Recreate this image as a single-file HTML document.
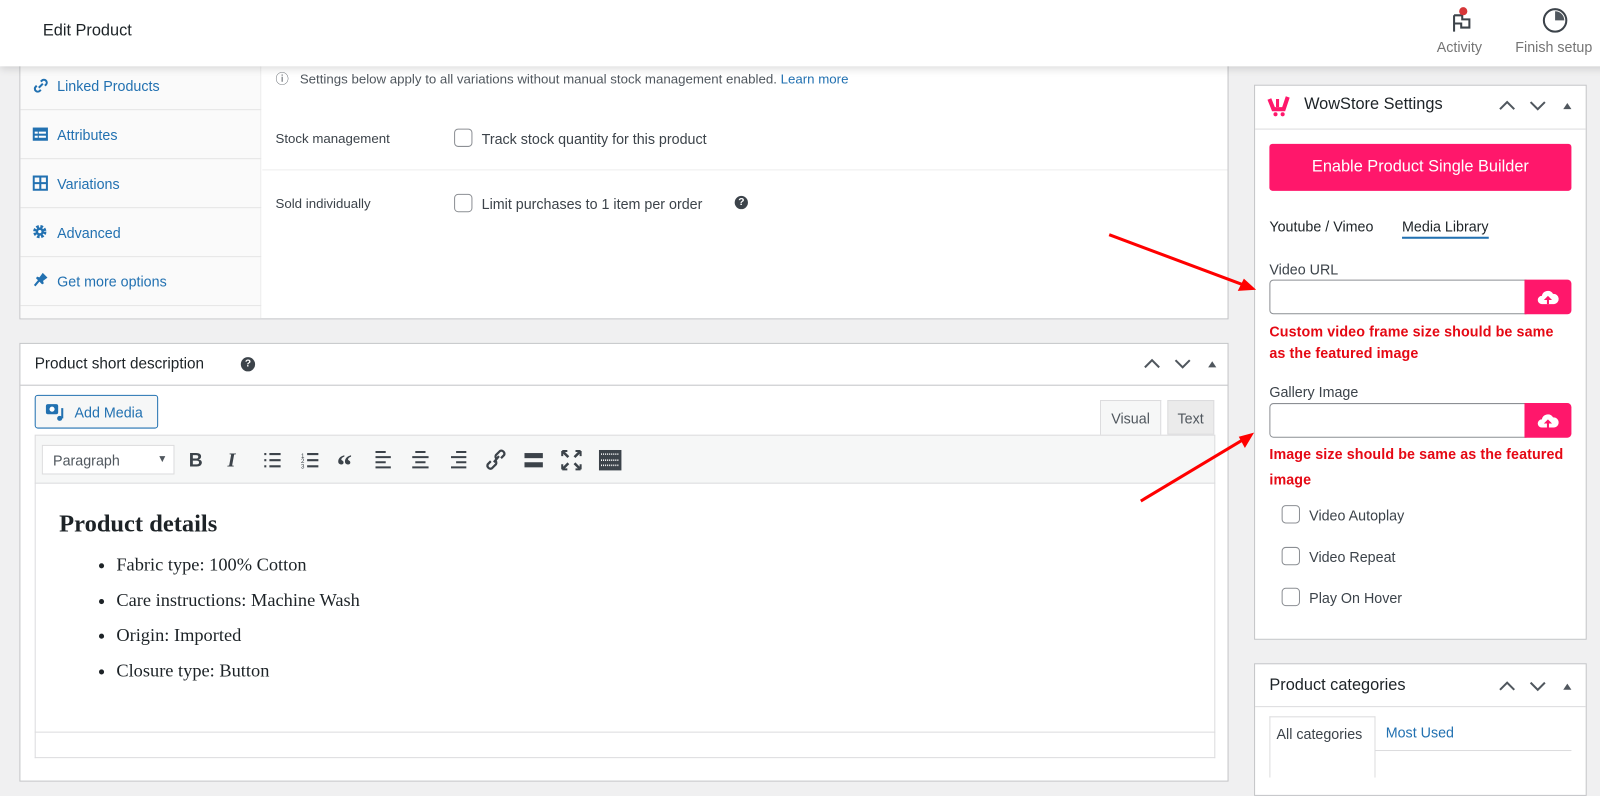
<!DOCTYPE html>
<html><head><meta charset="utf-8"><style>
*{box-sizing:border-box;margin:0;padding:0}
body{width:1600px;height:760px;overflow:hidden;background:#f0f0f1;font-family:"Liberation Sans",sans-serif;color:#1d2327;position:relative;font-size:14px}
#w{position:absolute;left:0;top:0;width:1568px;height:745px;transform:scale(1.0204);transform-origin:0 0}
.abs{position:absolute}
.top{left:0;top:0;width:1600px;height:65px;background:#fff;box-shadow:0 2px 8px rgba(0,0,0,.15);z-index:5}
.box{background:#fff;border:1px solid #c3c4c7}
.tab{position:absolute;left:0;width:236px;height:48px;border-bottom:1px solid #e5e5e5;color:#2271b1;font-size:14px;padding-left:36px;line-height:48px}
.cb{position:absolute;width:18px;height:18px;border:1px solid #8c8f94;border-radius:4px;background:#fff}
.red{color:#e50914;font-size:14px;font-weight:bold;letter-spacing:.1px}
</style></head><body><div id="w">
<div class="abs top">
 <div class="abs" style="left:42px;top:22px;font-size:16px;color:#1d2327">Edit Product</div>
 <svg class="abs" style="left:1421px;top:5px" width="24" height="28"><path d="M4 10v16M4 10h8v4h7v8h-8v-4H4" stroke="#3c434a" stroke-width="2" fill="none"/><circle cx="13" cy="6" r="4" fill="#d63638"/></svg>
 <div class="abs" style="left:1408px;top:38px;color:#757575;font-size:14px">Activity</div>
 <svg class="abs" style="left:1510px;top:6px" width="28" height="28"><circle cx="14" cy="14" r="11" stroke="#3c434a" stroke-width="2" fill="none"/><path d="M14 5a9 9 0 0 1 9 9h-9z" fill="#50575e"/></svg>
 <div class="abs" style="left:1485px;top:38px;color:#757575;font-size:14px">Finish setup</div>
</div>

<div class="abs box" style="left:19px;top:40px;width:1185px;height:273px"></div>
<div class="abs" style="left:20px;top:60px;width:236px;height:252px;background:#fafafa;border-right:1px solid #eee">
 <div class="tab" style="top:0">Linked Products</div>
 <div class="tab" style="top:48px">Attributes</div>
 <div class="tab" style="top:96px">Variations</div>
 <div class="tab" style="top:144px">Advanced</div>
 <div class="tab" style="top:192px">Get more options</div>
</div>
<svg class="abs" style="left:32px;top:76px" width="16" height="16"><path d="M6 10l4-4M4 8l-1 1a2.5 2.5 0 0 0 4 4l1-1M12 8l1-1a2.5 2.5 0 0 0-4-4l-1 1" stroke="#2271b1" stroke-width="2" fill="none"/></svg>
<svg class="abs" style="left:32px;top:125px" width="15" height="13"><rect width="15" height="13" fill="#2271b1"/><rect x="2" y="4" width="3" height="2" fill="#fff"/><rect x="6" y="4" width="7" height="2" fill="#fff"/><rect x="2" y="8" width="3" height="2" fill="#fff"/><rect x="6" y="8" width="7" height="2" fill="#fff"/></svg>
<svg class="abs" style="left:32px;top:172px" width="15" height="15"><rect x="1" y="1" width="13" height="13" stroke="#2271b1" stroke-width="2" fill="none"/><path d="M7.5 1v13M1 7.5h13" stroke="#2271b1" stroke-width="2"/></svg>
<svg class="abs" style="left:32px;top:220px" width="14" height="14"><circle cx="7" cy="7" r="5" fill="none" stroke="#2271b1" stroke-width="3" stroke-dasharray="2.5 1.5"/><circle cx="7" cy="7" r="4" fill="#2271b1"/><circle cx="7" cy="7" r="1.6" fill="#fff"/></svg>
<svg class="abs" style="left:33px;top:267px" width="14" height="14"><path d="M1 13l5-6M3 5l3 1 3-4 3 3-4 3 1 3z" stroke="#2271b1" stroke-width="2" fill="#2271b1"/></svg>
<div class="abs" style="left:270px;top:67px;font-size:13px;color:#50575e">ⓘ&nbsp;&nbsp; Settings below apply to all variations without manual stock management enabled. <span style="color:#2271b1">Learn more</span></div>
<div class="abs" style="left:270px;top:128px;font-size:13px;color:#3c434a">Stock management</div>
<div class="cb" style="left:445px;top:126px"></div>
<div class="abs" style="left:472px;top:128px;font-size:14px;color:#3c434a">Track stock quantity for this product</div>
<div class="abs" style="left:257px;top:166px;width:946px;height:1px;background:#eee"></div>
<div class="abs" style="left:270px;top:192px;font-size:13px;color:#3c434a">Sold individually</div>
<div class="cb" style="left:445px;top:190px"></div>
<div class="abs" style="left:472px;top:192px;font-size:14px;color:#3c434a">Limit purchases to 1 item per order</div>
<div class="abs" style="left:720px;top:192px;width:13px;height:13px;border-radius:50%;background:#3c434a;color:#fff;font-size:10px;text-align:center;line-height:13px;font-weight:bold">?</div>

<div class="abs box" style="left:19px;top:336px;width:1185px;height:430px"></div>
<div class="abs" style="left:20px;top:377px;width:1183px;height:1px;background:#c3c4c7"></div>
<div class="abs" style="left:34px;top:348px;font-size:15px;color:#1d2327">Product short description</div>
<div class="abs" style="left:236px;top:350px;width:14px;height:14px;border-radius:50%;background:#3c434a;color:#fff;font-size:10px;text-align:center;line-height:14px;font-weight:bold">?</div>
<svg class="abs" style="left:1118px;top:348px" width="80" height="16"><path d="M4 12l7-7 7 7M34 5l7 7 7-7" stroke="#50575e" stroke-width="2" fill="none"/><path d="M66 12l4-6 4 6z" fill="#50575e"/></svg>
<div class="abs" style="left:34px;top:387px;width:121px;height:33px;border:1px solid #2271b1;border-radius:3px;background:#f6f7f7;color:#2271b1;font-size:14px;padding:8px 0 0 38px">Add Media</div>
<svg class="abs" style="left:44px;top:394px" width="22" height="20"><rect x="1" y="2" width="12" height="10" rx="2" fill="#2271b1"/><circle cx="7" cy="7" r="2.5" fill="#fff"/><path d="M17 6v10" stroke="#2271b1" stroke-width="2"/><circle cx="14.5" cy="16" r="2.5" fill="#2271b1"/></svg>
<div class="abs" style="left:1078px;top:392px;width:60px;height:35px;border:1px solid #dcdcde;border-bottom:none;background:#f6f7f7;font-size:14px;color:#50575e;padding:9px 0 0 10px">Visual</div>
<div class="abs" style="left:1144px;top:392px;width:46px;height:34px;border:1px solid #dcdcde;background:#ebebeb;font-size:14px;color:#50575e;padding:9px 0 0 9px">Text</div>
<div class="abs" style="left:34px;top:426px;width:1157px;height:48px;background:#f6f7f7;border:1px solid #dcdcde"></div>
<div class="abs" style="left:41px;top:436px;width:130px;height:29px;background:#fff;border:1px solid #dcdcde;font-size:14px;color:#50575e;padding:6px 0 0 10px">Paragraph<span style="position:absolute;right:6px;top:8px;font-size:10px">▼</span></div>
<svg class="abs" style="left:180px;top:438px" width="440" height="26" fill="none" stroke="#3c434a">
<text x="5" y="19" font-family="Liberation Sans" font-weight="bold" font-size="19" fill="#3c434a" stroke="none">B</text>
<text x="43" y="19" font-family="Liberation Serif" font-style="italic" font-weight="bold" font-size="20" fill="#3c434a" stroke="none">I</text>
<g stroke-width="2"><path d="M79 7h2M79 13h2M79 19h2M84 7h11M84 13h11M84 19h11"/>
<path d="M121 7h11M121 13h11M121 19h11"/></g>
<text x="115" y="11" font-size="6" fill="#3c434a" stroke="none">1</text><text x="115" y="16" font-size="6" fill="#3c434a" stroke="none">2</text><text x="115" y="21" font-size="6" fill="#3c434a" stroke="none">3</text>
<text x="150" y="28" font-family="Liberation Serif" font-weight="bold" font-size="30" fill="#3c434a" stroke="none">“</text>
<g stroke-width="2"><path d="M188 5h10M188 10h15M188 15h10M188 20h15"/>
<path d="M227 5h10M224 10h16M227 15h10M224 20h16"/>
<path d="M267 5h10M262 10h15M267 15h10M262 20h15"/></g>
<path d="M301 14l-3 3a3 3 0 0 0 4 4l4-4a3 3 0 0 0-1-4M311 11l3-3a3 3 0 0 0-4-4l-4 4a3 3 0 0 0 1 4M304 15l5-6" stroke-width="2.2"/>
<rect x="334" y="6" width="18" height="5" fill="#3c434a" stroke="none"/><rect x="334" y="15" width="18" height="5" fill="#3c434a" stroke="none"/>
<path d="M372 5l5 5M388 5l-5 5M372 21l5-5M388 21l-5-5" stroke-width="2.5"/><path d="M371 4h5M371 4v5M389 4h-5M389 4v5M371 22h5M371 22v-5M389 22h-5M389 22v-5" stroke-width="2"/>
<rect x="407" y="3" width="22" height="20" fill="#3c434a" stroke="none"/><path d="M409 7h18M409 13h18M409 18h18" stroke="#fff" stroke-width="1.5" stroke-dasharray="1 1"/>
</svg>
<div class="abs" style="left:34px;top:473px;width:1157px;height:270px;border:1px solid #dcdcde;border-top:none"></div>
<div class="abs" style="left:34px;top:717px;width:1157px;height:1px;background:#dcdcde"></div>
<div class="abs" style="left:58px;top:501px;font-family:'Liberation Serif',serif;font-size:24px;font-weight:bold;color:#1d2327">Product details</div>
<ul class="abs" style="left:114px;top:536px;font-family:'Liberation Serif',serif;font-size:18px;color:#1d2327;line-height:34.5px">
<li>Fabric type: 100% Cotton</li><li>Care instructions: Machine Wash</li><li>Origin: Imported</li><li>Closure type: Button</li></ul>

<div class="abs box" style="left:1229px;top:83px;width:326px;height:544px"></div>
<div class="abs" style="left:1230px;top:126px;width:324px;height:1px;background:#dcdcde"></div>
<svg class="abs" style="left:1242px;top:93px" width="26" height="22"><path d="M2 4l4 10h10l4-12" stroke="#ff176b" stroke-width="4" fill="none"/><path d="M10 4v8" stroke="#ff176b" stroke-width="3"/><circle cx="8" cy="19" r="2" fill="#ff176b"/><circle cx="15" cy="19" r="2" fill="#ff176b"/></svg>
<div class="abs" style="left:1278px;top:94px;font-size:16px;color:#1d2327">WowStore Settings</div>
<svg class="abs" style="left:1466px;top:95px" width="80" height="16"><path d="M4 12l7-7 7 7M34 5l7 7 7-7" stroke="#50575e" stroke-width="2" fill="none"/><path d="M66 12l4-6 4 6z" fill="#50575e"/></svg>
<div class="abs" style="left:1244px;top:141px;width:296px;height:46px;background:#ff176b;border-radius:3px;color:#fff;font-size:16px;text-align:center;line-height:46px">Enable Product Single Builder</div>
<div class="abs" style="left:1244px;top:214px;font-size:14px;color:#1d2327">Youtube / Vimeo</div>
<div class="abs" style="left:1374px;top:214px;font-size:14px;color:#1d2327;border-bottom:2px solid #2271b1;padding-bottom:2px">Media Library</div>
<div class="abs" style="left:1244px;top:256px;font-size:14px;color:#3c434a">Video URL</div>
<div class="abs" style="left:1244px;top:274px;width:252px;height:34px;border:1px solid #8c8f94;border-radius:4px 0 0 4px;background:#fff"></div>
<div class="abs" style="left:1494px;top:274px;width:46px;height:34px;background:#ff176b;border-radius:0 4px 4px 0"></div>
<svg class="abs" style="left:1506px;top:283px" width="22" height="16"><path d="M5 15a4 4 0 0 1 0-8 6 6 0 0 1 11-2 5 5 0 0 1 1 10z" fill="#fff"/><path d="M11 7l-4 4h3v4h2v-4h3z" fill="#ff176b"/></svg>
<div class="abs red" style="left:1244px;top:315px;line-height:21px">Custom video frame size should be same<br>as the featured image</div>
<div class="abs" style="left:1244px;top:376px;font-size:14px;color:#3c434a">Gallery Image</div>
<div class="abs" style="left:1244px;top:395px;width:252px;height:34px;border:1px solid #8c8f94;border-radius:4px 0 0 4px;background:#fff"></div>
<div class="abs" style="left:1494px;top:395px;width:46px;height:34px;background:#ff176b;border-radius:0 4px 4px 0"></div>
<svg class="abs" style="left:1506px;top:404px" width="22" height="16"><path d="M5 15a4 4 0 0 1 0-8 6 6 0 0 1 11-2 5 5 0 0 1 1 10z" fill="#fff"/><path d="M11 7l-4 4h3v4h2v-4h3z" fill="#ff176b"/></svg>
<div class="abs red" style="left:1244px;top:433px;line-height:25px">Image size should be same as the featured<br>image</div>
<div class="cb" style="left:1256px;top:495px"></div><div class="abs" style="left:1283px;top:497px;font-size:14px;color:#3c434a">Video Autoplay</div>
<div class="cb" style="left:1256px;top:536px"></div><div class="abs" style="left:1283px;top:538px;font-size:14px;color:#3c434a">Video Repeat</div>
<div class="cb" style="left:1256px;top:576px"></div><div class="abs" style="left:1283px;top:578px;font-size:14px;color:#3c434a">Play On Hover</div>

<div class="abs box" style="left:1229px;top:650px;width:326px;height:130px"></div>
<div class="abs" style="left:1230px;top:692px;width:324px;height:1px;background:#dcdcde"></div>
<div class="abs" style="left:1244px;top:663px;font-size:16px;color:#1d2327">Product categories</div>
<svg class="abs" style="left:1466px;top:664px" width="80" height="16"><path d="M4 12l7-7 7 7M34 5l7 7 7-7" stroke="#50575e" stroke-width="2" fill="none"/><path d="M66 12l4-6 4 6z" fill="#50575e"/></svg>
<div class="abs" style="left:1244px;top:702px;width:104px;height:60px;border:1px solid #dcdcde;border-bottom:none;background:#fff;font-size:14px;color:#3c434a;padding:8px 0 0 6px">All categories</div>
<div class="abs" style="left:1358px;top:710px;font-size:14px;color:#2271b1">Most Used</div>
<div class="abs" style="left:1348px;top:735px;width:192px;height:1px;background:#dcdcde"></div>

<svg class="abs" style="left:0;top:0" width="1600" height="760">
<line x1="1087" y1="230" x2="1218" y2="279" stroke="#f00" stroke-width="3"/>
<path d="M1231 284l-18 1 6-12z" fill="#f00"/>
<line x1="1118" y1="491" x2="1218" y2="431" stroke="#f00" stroke-width="3"/>
<path d="M1229 424l-9 15-6-11z" fill="#f00"/>
</svg>
</div></body></html>
